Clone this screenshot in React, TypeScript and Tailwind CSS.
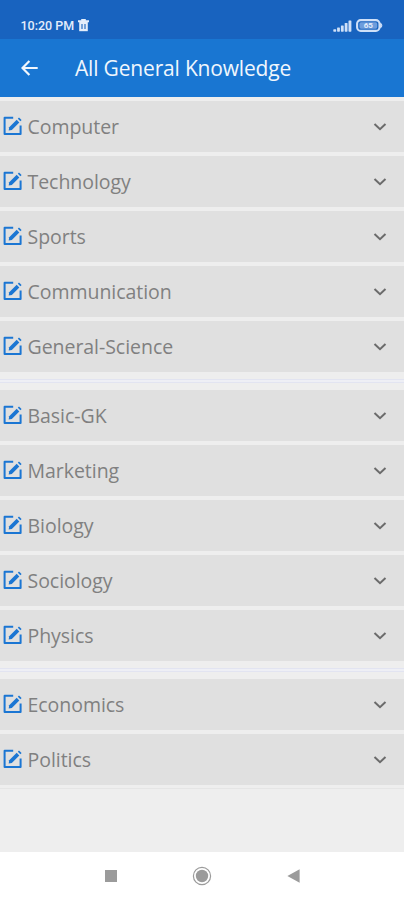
type Section = {
  id: string
  topics: string[]
}

const sections: Section[] = [
  { id: "first", topics: ["Computer", "Technology", "Sports", "Communication", "General-Science"] },
  { id: "second", topics: ["Basic-GK", "Marketing", "Biology", "Sociology", "Physics"] },
  { id: "third", topics: ["Economics", "Politics"] },
]

const TrashIcon = () => (
  <svg width="11" height="13" viewBox="0 0 11 13" fill="none">
    <path d="M0 1.2h3.2V0h4.6v1.2H11v2H0z" fill="#e3edfb" />
    <path d="M1.2 3h8.6v9.2H1.2z" fill="#e3edfb" />
    <path d="M4 5v5M7 5v5" stroke="#1862bd" strokeWidth="1.1" />
  </svg>
)

const SignalIcon = () => (
  <svg width="19" height="12" viewBox="0 0 19 12" fill="#cfe0f8">
    <rect x="0.3" y="9.3" width="2.9" height="2.4" rx="0.6" />
    <rect x="4.1" y="7.6" width="2.8" height="4.1" rx="0.6" />
    <rect x="7.9" y="5.5" width="2.8" height="6.2" rx="0.6" />
    <rect x="11.7" y="3" width="2.8" height="8.7" rx="0.6" />
    <rect x="15.5" y="0.4" width="2.9" height="11.3" rx="0.6" />
  </svg>
)

const BatteryIcon = () => (
  <svg width="27" height="13" viewBox="0 0 27 13" fill="none">
    <rect x="1.1" y="1.1" width="22.4" height="10.8" rx="3.6" stroke="#cfe0f8" strokeWidth="2.1" />
    <rect x="3.4" y="3.3" width="17.8" height="6.4" rx="1.6" fill="#6d9ddc" />
    <path d="M24.6 4.2c1.6.5 1.6 4.1 0 4.6z" fill="#cfe0f8" stroke="#cfe0f8" />
    <text x="12.3" y="9.4" textAnchor="middle" fontSize="8" fontWeight="700" fill="#e3edfb" fontFamily="Roboto, sans-serif">
      65
    </text>
  </svg>
)

const EditIcon = () => (
  <svg className="mb-[2px]" width="20" height="20" viewBox="0 0 20 20" fill="none" stroke="#1b76d3">
    <path d="M10.2 1.7H1.6V18h16V9.6" strokeWidth="2" strokeLinejoin="round" />
    <path d="M5.7 14.5l.5-3.2 7.5-7.5 2.6 2.6-7.5 7.5z" fill="#1b76d3" stroke="none" />
    <path d="M14.8 2.7l1.2-1.2 2.6 2.6-1.2 1.2z" fill="#1b76d3" stroke="none" />
  </svg>
)

const TopicRow = ({ title }: { title: string }) => (
  <button type="button" className="flex h-[51px] w-full items-center bg-[#e0e0e0] pl-[3px] pr-[17px]">
    <EditIcon />
    <span className="ml-[4.5px] flex-1 text-left text-[19.5px] leading-[26px] tracking-[-0.04px] text-[#808080]">
      {title}
    </span>
    <svg width="14" height="10" viewBox="0 0 14 10" fill="none" stroke="#6b6b6b" strokeWidth="2">
      <path d="M1.5 2L7 7.2 12.5 2" />
    </svg>
  </button>
)

const App = () => {
  return (
    <div className="flex h-[900px] w-[404px] flex-col overflow-hidden bg-[#eeeeee] font-['Open_Sans','Noto_Sans',sans-serif]">
      <div className="flex h-[39px] shrink-0 items-center justify-between bg-[#1863bf] pl-[20.5px] pr-[21px] pt-[12px]">
        <div className="flex items-center gap-[4px]">
          <span className="font-['Roboto',sans-serif] text-[12.5px] font-medium leading-4 text-[#e3edfb]">10:20 PM</span>
          <TrashIcon />
        </div>
        <div className="flex items-center gap-[4px]">
          <SignalIcon />
          <BatteryIcon />
        </div>
      </div>

      <header className="flex h-[58px] shrink-0 items-center bg-[#1976d2] pl-[21px]">
        <svg width="17" height="16" viewBox="0 0 17 16" fill="none" stroke="#f0f6fd" strokeWidth="2.2">
          <path d="M8.4 0.9L1.5 8l6.9 7.1M1.5 8h15.2" />
        </svg>
        <h1 className="ml-[37px] text-[21px] leading-7 tracking-[-0.18px] text-[#f0f6fd]">All General Knowledge</h1>
      </header>

      <main className="flex flex-1 flex-col pt-[4px]">
        {sections.map((section, index) => (
          <div key={section.id}>
            {index > 0 && (
              <div className="flex h-[18px] flex-col pt-[7px]">
                <div className="h-[4px] border-y border-[#e2e4f1] bg-[#eeeff5]" />
              </div>
            )}
            <div className="flex flex-col gap-[4px]">
              {section.topics.map((topic) => (
                <TopicRow key={topic} title={topic} />
              ))}
            </div>
          </div>
        ))}
        <div className="mt-[3px] h-px bg-[#e5e5e5]" />
      </main>

      <nav className="flex h-[48px] shrink-0 items-center justify-between bg-white pl-[105px] pr-[104px]">
        <div className="h-3 w-3 bg-[#9b9b9b]" />
        <svg width="20" height="20" viewBox="0 0 20 20">
          <circle cx="10" cy="10" r="8.6" fill="none" stroke="#9b9b9b" strokeWidth="1.2" />
          <circle cx="10" cy="10" r="6.2" fill="#9b9b9b" />
        </svg>
        <svg width="13" height="14" viewBox="0 0 13 14" fill="#9b9b9b">
          <path d="M0.4 7L12.6 0.2v13.6z" />
        </svg>
      </nav>
    </div>
  )
}

export default App
